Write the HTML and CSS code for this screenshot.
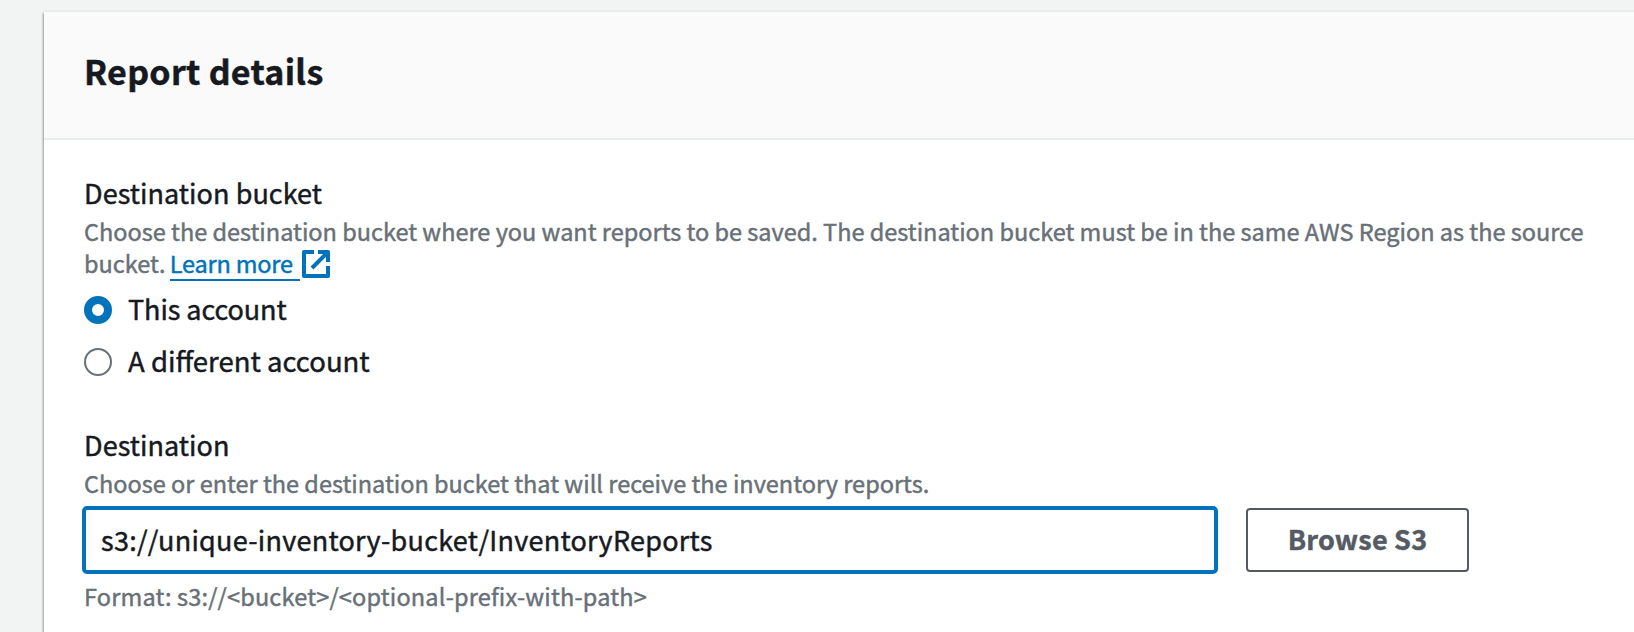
FILE: index.html
```html
<!DOCTYPE html>
<html lang="en">
<head>
<meta charset="utf-8">
<title>Report details</title>
<link rel="stylesheet" href="styles.css">
</head>
<body>
<section class="panel">
  <header class="panel-header"><h2 class="title">Report details</h2></header>
  <div class="panel-body">
    <div class="field">
      <div class="label">Destination bucket</div>
      <div class="hint">Choose the destination bucket where you want reports to be saved. The destination bucket must be in the same AWS Region as the source<br>bucket. <a class="link">Learn more</a><svg class="external" viewBox="0 0 28 28" width="28" height="28"><path d="M12 2H2v24h24V16M16 2h10v10M26 2L10 18" fill="none" stroke="#0073bb" stroke-width="4" stroke-linejoin="round"/></svg></div>
      <div class="radios">
        <label class="radio"><span class="dot checked"></span><span class="radio-text">This account</span></label>
        <label class="radio"><span class="dot"></span><span class="radio-text wide">A different account</span></label>
      </div>
    </div>
    <div class="field">
      <div class="label">Destination</div>
      <div class="hint">Choose or enter the destination bucket that will receive the inventory reports.</div>
      <div class="input-row">
        <div class="input">s3://unique-inventory-bucket/InventoryReports</div>
        <button class="button">Browse S3</button>
      </div>
      <div class="hint format">Format: s3://&lt;bucket&gt;/&lt;optional-prefix-with-path&gt;</div>
    </div>
  </div>
</section>
</body>
</html>
```
FILE: styles.css
```css
* { box-sizing: border-box; }
body {
  margin: 0;
  height: 632px;
  overflow: hidden;
  padding: 12px 0 0 44px;
  background: #f2f3f3;
  color: #16191f;
  font-family: "Noto Sans CJK SC", "Noto Sans", sans-serif;
  font-size: 27px;
  -webkit-text-stroke: .45px currentColor;
}
.panel {
  width: 1640px;
  height: 640px;
  background: #fff;
  box-shadow: 0 -2px 0 #eaeded, -1px 1px 2px rgba(0, 28, 36, .4);
}
.panel-header {
  height: 128px;
  padding: 37px 40px 0;
  background: #fafafa;
  border-bottom: 2px solid #eaeded;
}
.title { margin: 0; font-size: 34px; line-height: 44px; font-weight: 700; letter-spacing: .3px; }
.panel-body { padding: 31px 38px 0 40px; white-space: nowrap; }
.label { height: 44px; line-height: 44px; letter-spacing: .06px; }
.hint { color: #687078; font-size: 23.5px; line-height: 32px; }
.link { display: inline-block; height: 34px; width: 130px; margin: 0 0 -2px -1px; color: #0073bb; border-bottom: 2px solid #0073bb; vertical-align: top; letter-spacing: -.2px; }
.external { margin-left: 2px; vertical-align: -5px; }
.radios { display: grid; row-gap: 8px; padding-top: 9px; }
.radio { display: flex; align-items: center; gap: 16px; height: 44px; }
.radio-text { line-height: 40px; padding-bottom: 3px; letter-spacing: -.08px; }
.wide { font-size: 27.5px; padding-bottom: 4px; letter-spacing: 0; }
.dot { width: 28px; height: 28px; border: 2px solid #687078; border-radius: 50%; }
.dot.checked { border: 8px solid #0073bb; }
.field + .field { margin-top: 39px; }
.input-row { display: flex; align-items: center; gap: 28px; margin: 7px 0 0 -2px; }
.input { width: 1136px; height: 68px; border: 4px solid #0073bb; border-radius: 5px; padding: 0 15px; line-height: 59px; letter-spacing: .26px; }
.button { width: 223px; height: 64px; padding: 0 0 2px; background: #fff; border: 2px solid #545b64; border-radius: 4px; color: #545b64; font: 700 27px/58px "Noto Sans CJK SC", sans-serif; letter-spacing: .2px; }
.format { padding-top: 6px; letter-spacing: .18px; }
```
